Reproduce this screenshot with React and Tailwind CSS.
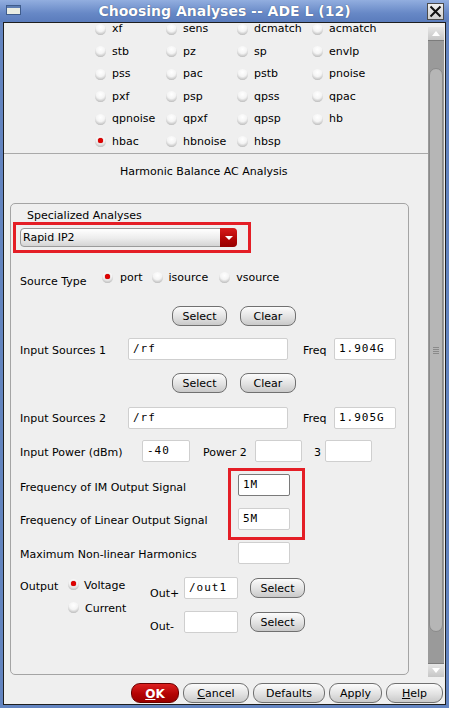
const rows = [
  ['xf', 'sens', 'dcmatch', 'acmatch'],
  ['stb', 'pz', 'sp', 'envlp'],
  ['pss', 'pac', 'pstb', 'pnoise'],
  ['pxf', 'psp', 'qpss', 'qpac'],
  ['qpnoise', 'qpxf', 'qpsp', 'hb'],
  ['hbac', 'hbnoise', 'hbsp'],
];

function Radio({ on }) {
  return (
    <span className="relative inline-block h-[11px] w-[11px] shrink-0 rounded-full bg-[radial-gradient(circle_at_50%_30%,#ffffff_0%,#f4f4f4_45%,#c6c6c6_75%,#8c8c8c_100%)]">
      {on && <span className="absolute left-[3px] top-[2px] h-[5px] w-[5px] rounded-full bg-[#e00000] shadow-[0_0_1px_#800000]" />}
    </span>
  );
}

function Btn({ children, className = '' }) {
  return (
    <div className={`flex h-[20px] items-center justify-center rounded-[8px] border border-[#707070] bg-[linear-gradient(#fcfcfc,#e2e2e2_55%,#c9c9c9)] pt-[2px] text-[11px] text-black ${className}`}>
      {children}
    </div>
  );
}

function Field({ value = '', className = '', dark }) {
  return (
    <div
      className={`flex h-[22px] shrink-0 items-center rounded-[2px] border bg-white pl-[4px] pt-[1px] font-['DejaVu_Sans_Mono',monospace] text-[11px] tracking-[1px] text-black ${
        dark ? 'border-[#7a7a7a]' : 'border-[#cfcfcf]'
      } ${className}`}
    >
      {value}
    </div>
  );
}

function Lbl({ children, className = '' }) {
  return <span className={`shrink-0 leading-[14px] ${className}`}>{children}</span>;
}

export default function App() {
  return (
    <div className="flex h-[708px] w-[449px] flex-col bg-[#6384c0] font-['DejaVu_Sans',sans-serif] text-[11px] text-black">
      {/* title bar */}
      <div className="relative flex h-[22px] shrink-0 items-center justify-center bg-[linear-gradient(#92aedf,#6788c6_60%,#5a7cbc)]">
        <div className="absolute left-[6px] top-[5px] h-[10px] w-[15px] border border-[#3f5c8c] bg-[#e9ece2]">
          <div className="h-[2px] bg-[#5d7db3]" />
        </div>
        <span className="text-[14px] font-bold leading-none text-white [text-shadow:0_0_1px_#2a3f66]">
          Choosing Analyses -- ADE L (12)
        </span>
        <div className="absolute right-[5px] top-[3px] flex h-[17px] w-[17px] items-center justify-center border border-[#4a4a4a] bg-[linear-gradient(#f0f0f0,#cfcfcf)]">
          <svg width="13" height="13" viewBox="0 0 13 13">
            <path d="M1.5 1.5L11.5 11.5M11.5 1.5L1.5 11.5" stroke="#111" strokeWidth="2" />
          </svg>
        </div>
      </div>

      {/* body */}
      <div className="mx-[3px] mb-[3px] flex flex-1 flex-col border border-[#1e1e1e] bg-[#efefef]">
        <div className="flex h-[657px] shrink-0">
          {/* scroll viewport */}
          <div className="flex-1 overflow-hidden">
            <div className="-mt-[5px] border-b border-[#a9a9a9] pl-[91px]">
              {rows.map((r, i) => (
                <div key={i} className="grid h-[22.5px] grid-cols-[71px_71px_75px_auto] items-center">
                  {r.map((n) => (
                    <div key={n} className="flex items-center gap-[6px]">
                      <Radio on={n === 'hbac'} />
                      <span>{n}</span>
                    </div>
                  ))}
                </div>
              ))}
            </div>
            <div className="mt-[11px] pl-[116px] leading-[14px]">Harmonic Balance AC Analysis</div>

            {/* group box */}
            <div className="relative ml-[6px] mt-[24px] h-[472px] w-[399px] rounded-[5px] border border-[#a4a4a4]">
              <div className="pl-[16px] pt-[6px] leading-[12px]">Specialized Analyses</div>
              <div className="ml-[2px] h-[31px] w-[238px] border-[3px] border-[#e41e26]">
                <div className="ml-[4px] mt-[3px] flex h-[19px] w-[217px] items-center rounded-[4px] border border-[#9a9a9a] bg-[linear-gradient(#ffffff,#ececec_55%,#d4d4d4)]">
                  <span className="flex-1 pl-[2px] pt-px">Rapid IP2</span>
                  <div className="-mr-px flex h-[19px] w-[17px] items-center justify-center rounded-r-[4px] bg-[linear-gradient(#d81c1c,#b00404_60%,#960000)]">
                    <span className="h-0 w-0 border-x-[4px] border-t-[4px] border-x-transparent border-t-white" />
                  </div>
                </div>
              </div>

              {/* source type */}
              <div className="mt-[16px] flex h-[20px] pl-[9px]">
                <Lbl className="mt-[6px] w-[82px]">Source Type</Lbl>
                <span className="mt-[3px]"><Radio on /></span>
                <Lbl className="ml-[7px] mt-[2px]">port</Lbl>
                <span className="ml-[9px] mt-[3px]"><Radio /></span>
                <Lbl className="ml-[6px] mt-[2px]">isource</Lbl>
                <span className="ml-[11px] mt-[3px]"><Radio /></span>
                <Lbl className="ml-[6px] mt-[2px]">vsource</Lbl>
              </div>

              <div className="mt-[17px] flex pl-[161px]">
                <Btn className="w-[55px]">Select</Btn>
                <Btn className="ml-[13px] w-[56px]">Clear</Btn>
              </div>

              <div className="mt-[12px] flex h-[22px] items-start pl-[9px]">
                <Lbl className="mt-[6px] w-[108px]">Input Sources 1</Lbl>
                <Field value="/rf" className="w-[160px]" />
                <Lbl className="mt-[6px] w-[46px] pl-[15px]">Freq</Lbl>
                <Field value="1.904G" className="w-[62px]" />
              </div>

              <div className="mt-[13px] flex pl-[161px]">
                <Btn className="w-[55px]">Select</Btn>
                <Btn className="ml-[13px] w-[56px]">Clear</Btn>
              </div>

              <div className="mt-[14px] flex h-[22px] items-start pl-[9px]">
                <Lbl className="mt-[5px] w-[108px]">Input Sources 2</Lbl>
                <Field value="/rf" className="w-[160px]" />
                <Lbl className="mt-[5px] w-[46px] pl-[15px]">Freq</Lbl>
                <Field value="1.905G" className="w-[62px]" />
              </div>

              <div className="mt-[11px] flex h-[22px] items-start pl-[9px]">
                <Lbl className="mt-[6px] w-[122px]">Input Power (dBm)</Lbl>
                <Field value="-40" className="w-[48px]" />
                <Lbl className="mt-[6px] w-[65px] pl-[13px]">Power 2</Lbl>
                <Field className="w-[47px]" />
                <Lbl className="mt-[6px] w-[23px] pl-[12px]">3</Lbl>
                <Field className="w-[47px]" />
              </div>

              <div className="mt-[12px] flex h-[22px] items-start pl-[9px]">
                <Lbl className="mt-[7px] w-[218px]">Frequency of IM Output Signal</Lbl>
                <Field value="1M" dark className="w-[52px]" />
              </div>
              <div className="mt-[12px] flex h-[22px] items-start pl-[9px]">
                <Lbl className="mt-[6px] w-[218px]">Frequency of Linear Output Signal</Lbl>
                <Field value="5M" className="w-[52px]" />
              </div>
              <div className="mt-[12px] flex h-[22px] items-start pl-[9px]">
                <Lbl className="mt-[6px] w-[218px]">Maximum Non-linear Harmonics</Lbl>
                <Field className="w-[52px]" />
              </div>

              {/* output */}
              <div className="mt-[13px] flex pl-[9px]">
                <Lbl className="mt-[3px] w-[48px]">Output</Lbl>
                <div className="w-[82px]">
                  <div className="flex h-[14px] items-start gap-[5px]">
                    <span className="mt-[2px]"><Radio on /></span>
                    <Lbl className="mt-[2px]">Voltage</Lbl>
                  </div>
                  <div className="mt-[9px] flex h-[14px] items-start gap-[6px]">
                    <span className="mt-[2px]"><Radio /></span>
                    <Lbl className="mt-[2px]">Current</Lbl>
                  </div>
                </div>
                <div>
                  <div className="flex h-[22px] items-start">
                    <Lbl className="mt-[10px] w-[34px]">Out+</Lbl>
                    <Field value="/out1" className="w-[54px]" />
                    <Btn className="ml-[12px] mt-[1px] w-[55px]">Select</Btn>
                  </div>
                  <div className="mt-[12px] flex h-[22px] items-start">
                    <Lbl className="mt-[9px] w-[34px]">Out-</Lbl>
                    <Field className="w-[54px]" />
                    <Btn className="ml-[12px] mt-[1px] w-[55px]">Select</Btn>
                  </div>
                </div>
              </div>

              {/* annotation box over the two frequency fields */}
              <div className="absolute left-[217px] top-[264px] h-[72px] w-[77px] border-[3px] border-[#e41e26]" />
            </div>
          </div>

          {/* scrollbar */}
          <div className="mb-[3px] mr-[1px] mt-[4px] flex w-[16px] flex-col bg-[#9a9a9a]">
            <div className="flex h-[14px] items-center justify-center border-b border-[#7c7c7c] bg-[linear-gradient(#e6e6e6,#c6c6c6)]">
              <span className="h-0 w-0 border-x-[4px] border-b-[5px] border-x-transparent border-b-white" />
            </div>
            <div className="flex flex-1 flex-col px-px pb-[31px] pt-[27px]">
              <div className="flex flex-1 items-center justify-center rounded-[7px] border border-[#8a8a8a] bg-[#b6b6b6]">
                <div className="flex w-[6px] flex-col gap-px">
                  <span className="h-px bg-[#8a8a8a]" />
                  <span className="h-px bg-[#8a8a8a]" />
                  <span className="h-px bg-[#8a8a8a]" />
                  <span className="h-px bg-[#8a8a8a]" />
                </div>
              </div>
            </div>
            <div className="flex h-[14px] items-center justify-center border-t border-[#7c7c7c] bg-[linear-gradient(#e6e6e6,#c6c6c6)]">
              <span className="h-0 w-0 border-x-[4px] border-t-[5px] border-x-transparent border-t-white" />
            </div>
          </div>
        </div>

        {/* button bar */}
        <div className="flex flex-1 justify-end gap-[4px] pr-[2px] pt-[3px]">
          <div className="flex h-[20px] w-[48px] items-center justify-center rounded-[9px] border border-[#6a0000] bg-[linear-gradient(#dc2020,#b40404_55%,#9a0000)] pt-[2px] text-[12px] font-bold text-white">
            <span><span className="underline">O</span>K</span>
          </div>
          <Btn className="w-[66px] rounded-[9px]"><span><span className="underline">C</span>ancel</span></Btn>
          <Btn className="w-[72px] rounded-[9px]">Defaults</Btn>
          <Btn className="w-[53px] rounded-[9px]">Apply</Btn>
          <Btn className="w-[57px] rounded-[9px]"><span><span className="underline">H</span>elp</span></Btn>
        </div>
      </div>
    </div>
  );
}
